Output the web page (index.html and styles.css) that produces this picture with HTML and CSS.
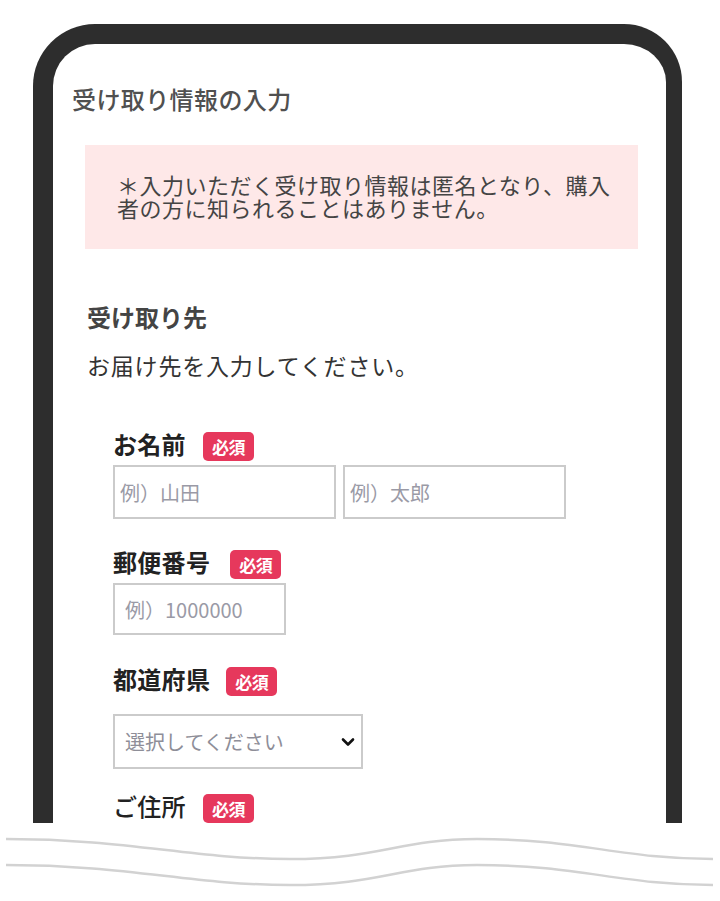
FILE: index.html
```html
<!DOCTYPE html>
<html lang="ja">
<head>
<meta charset="utf-8">
<title>受け取り情報の入力</title>
<link rel="stylesheet" href="styles.css">
</head>
<body>
<div class="phone">
  <div class="screen">
    <h1 class="title">受け取り情報の入力</h1>
    <div class="content">
      <p class="notice">＊入力いただく受け取り情報は匿名となり、購入者の方に知られることはありません。</p>
      <h2 class="section-title">受け取り先</h2>
      <p class="lead">お届け先を入力してください。</p>
      <div class="fields">
        <div class="field field-name">
          <div class="label-row"><span class="label">お名前</span><span class="badge">必須</span></div>
          <div class="input-row">
            <input class="input input-name" type="text" placeholder="例）山田">
            <input class="input input-name" type="text" placeholder="例）太郎">
          </div>
        </div>
        <div class="field field-zip">
          <div class="label-row"><span class="label">郵便番号</span><span class="badge">必須</span></div>
          <div class="input-row">
            <input class="input input-zip" type="text" placeholder="例）1000000">
          </div>
        </div>
        <div class="field field-pref">
          <div class="label-row"><span class="label">都道府県</span><span class="badge">必須</span></div>
          <div class="select-wrap">
            <select class="select">
              <option>選択してください</option>
            </select>
            <svg class="chevron" width="14" height="10" viewBox="0 0 14 10" aria-hidden="true">
              <path d="M2 2.5 L7 7.5 L12 2.5" fill="none" stroke="#111" stroke-width="2.6" stroke-linecap="round" stroke-linejoin="round"/>
            </svg>
          </div>
        </div>
        <div class="field field-address">
          <div class="label-row"><span class="label">ご住所</span><span class="badge">必須</span></div>
        </div>
      </div>
    </div>
  </div>
</div>
<svg class="wave" width="720" height="78" viewBox="0 0 720 78" aria-hidden="true">
  <path d="M6 16 C130 16 190 36 290 36 C380 36 400 16 477 16 C580 16 620 36 713 36" fill="none" stroke="#d2d2d2" stroke-width="2.5"/>
  <path d="M6 42 C130 42 190 62 290 62 C380 62 400 42 477 42 C580 42 620 62 713 62" fill="none" stroke="#d2d2d2" stroke-width="2.5"/>
</svg>
</body>
</html>
```

FILE: styles.css
```css
* {
  box-sizing: border-box;
}

html, body {
  margin: 0;
  padding: 0;
  background: #ffffff;
}

body {
  width: 720px;
  height: 901px;
  overflow: hidden;
  font-family: "Noto Sans CJK JP", "Noto Sans", sans-serif;
  color: #333;
}

.phone {
  margin: 24px 0 0 33px;
  width: 649px;
  height: 799px;
  border-style: solid;
  border-color: #2d2d2d;
  border-width: 20px 16px 0 20px;
  border-radius: 62px 58px 0 0;
  overflow: hidden;
  background: #fff;
}

.screen {
  padding: 40px 12px 0 19px;
}

.title {
  margin: 0;
  font-size: 24px;
  line-height: 30px;
  font-weight: 500;
  color: #505050;
  letter-spacing: 0.4px;
}

.content {
  margin-left: 13px;
}

.notice {
  margin: 31px 0 0;
  width: 553px;
  padding: 28px 16px 30px 32px;
  background: #fee8e8;
  font-size: 22px;
  line-height: 23px;
  letter-spacing: 0.5px;
  color: #444;
}

.section-title {
  margin: 53px 0 0 2px;
  font-size: 24px;
  line-height: 30px;
  font-weight: 700;
  color: #444;
}

.lead {
  margin: 18px 0 0 2px;
  font-size: 23px;
  line-height: 30px;
  letter-spacing: 0.8px;
  color: #333;
}

.fields {
  margin: 49px 0 0 28px;
  display: flex;
  flex-direction: column;
}

.field-zip {
  margin-top: 28px;
}

.field-pref {
  margin-top: 29px;
}

.field-address {
  margin-top: 22px;
}

.label-row {
  display: flex;
  align-items: center;
  height: 30px;
}

.label {
  font-size: 24px;
  line-height: 30px;
  font-weight: 700;
  color: #222;
  letter-spacing: 0.3px;
}

.field-address .label {
  font-weight: 500;
}

.badge {
  margin-left: 17px;
  margin-top: 5px;
  width: 51px;
  height: 29px;
  border-radius: 5px;
  background: #e6385c;
  color: #fff;
  font-size: 17px;
  font-weight: 700;
  line-height: 29px;
  text-align: center;
  letter-spacing: -0.5px;
}

.field-pref .badge {
  margin-left: 16px;
}

.field-zip .badge {
  margin-left: 20px;
}

.input-row {
  display: flex;
  gap: 7px;
  margin-top: 6px;
}

.input {
  display: block;
  height: 54px;
  border: 2px solid #cbcbcb;
  border-radius: 0;
  background: #fff;
  font-family: "Noto Sans CJK JP", "Noto Sans", sans-serif;
  font-size: 20px;
  color: #333;
  outline: none;
}

.input::placeholder {
  color: #9a9aa6;
}

.input-name {
  width: 223px;
  padding: 0 5px;
}

.input-zip {
  width: 173px;
  height: 52px;
  padding: 0 10px;
}

.select-wrap {
  position: relative;
  width: 250px;
  margin-top: 20px;
}

.select {
  display: block;
  width: 250px;
  height: 55px;
  padding: 0 40px 0 10px;
  border: 2px solid #cbcbcb;
  border-radius: 0;
  background: #fff;
  appearance: none;
  -webkit-appearance: none;
  font-family: "Noto Sans CJK JP", "Noto Sans", sans-serif;
  font-size: 20px;
  color: #8e8e98;
  outline: none;
}

.chevron {
  position: absolute;
  right: 8px;
  top: 23px;
  pointer-events: none;
}

.wave {
  display: block;
}
```
